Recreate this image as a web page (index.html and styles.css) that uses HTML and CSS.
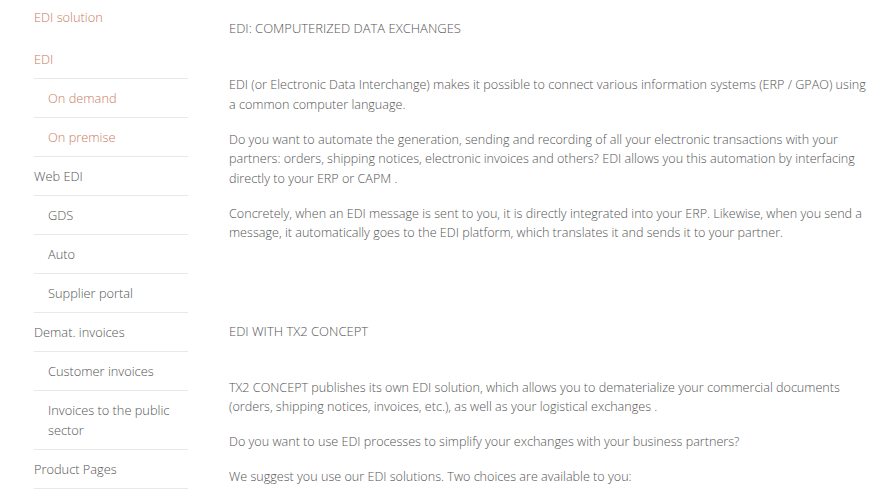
FILE: index.html
```html
<!DOCTYPE html>
<html>
<head>
<meta charset="utf-8">
<link rel="stylesheet" href="styles.css">
</head>
<body>
<div class="page">
  <nav class="side">
    <a class="item top active">EDI solution</a>
    <a class="item active">EDI</a>
    <a class="item sub active">On demand</a>
    <a class="item sub active">On premise</a>
    <a class="item">Web EDI</a>
    <a class="item sub">GDS</a>
    <a class="item sub">Auto</a>
    <a class="item sub">Supplier portal</a>
    <a class="item">Demat. invoices</a>
    <a class="item sub">Customer invoices</a>
    <a class="item sub">Invoices to the public sector</a>
    <a class="item">Product Pages</a>
  </nav>
  <main class="content">
    <h2 class="title">EDI: COMPUTERIZED DATA EXCHANGES</h2>
    <p>EDI (or Electronic Data Interchange) makes it possible to connect various information systems (ERP / GPAO) using a common computer language.</p>
    <p>Do you want to automate the generation, sending and recording of all your electronic transactions with your partners: orders, shipping notices, electronic invoices and others? EDI allows you this automation by interfacing directly to your ERP or CAPM .</p>
    <p>Concretely, when an EDI message is sent to you, it is directly integrated into your ERP. Likewise, when you send a message, it automatically goes to the EDI platform, which translates it and sends it to your partner.</p>
    <h2 class="title second">EDI WITH TX2 CONCEPT</h2>
    <p>TX2 CONCEPT publishes its own EDI solution, which allows you to dematerialize your commercial documents (orders, shipping notices, invoices, etc.), as well as your logistical exchanges .</p>
    <p>Do you want to use EDI processes to simplify your exchanges with your business partners?</p>
    <p>We suggest you use our EDI solutions. Two choices are available to you:</p>
  </main>
</div>
</body>
</html>
```
FILE: styles.css
```css
html, body {
  margin: 0;
  padding: 0;
  background: #fff;
}
body {
  font-family: "Open Sans", sans-serif;
  font-weight: 300;
  color: #555;
  font-size: 12.6px;
}
.page {
  display: flex;
  align-items: flex-start;
  padding-left: 34px;
}
.side {
  width: 154px;
  flex: none;
  display: flex;
  flex-direction: column;
}
.item {
  display: block;
  font-size: 12.8px;
  line-height: 20px;
  padding: 9px 0 9px 0;
  border-bottom: 1px solid #e8e8e8;
  color: #555;
}
.item.top {
  border-bottom: none;
  padding-top: 7px;
  padding-bottom: 13px;
}
.item.sub {
  padding-left: 14px;
}
.item.active {
  color: #c97b62;
}
.content {
  margin-left: 41px;
  width: 642px;
  padding-top: 18px;
}
.title {
  font-size: 13px;
  font-weight: 300;
  margin: 0 0 37px 0;
  line-height: 20px;
}
.title.second {
  margin-top: 78px;
}
p {
  margin: 0 0 15.5px 0;
  line-height: 19.5px;
}
```
